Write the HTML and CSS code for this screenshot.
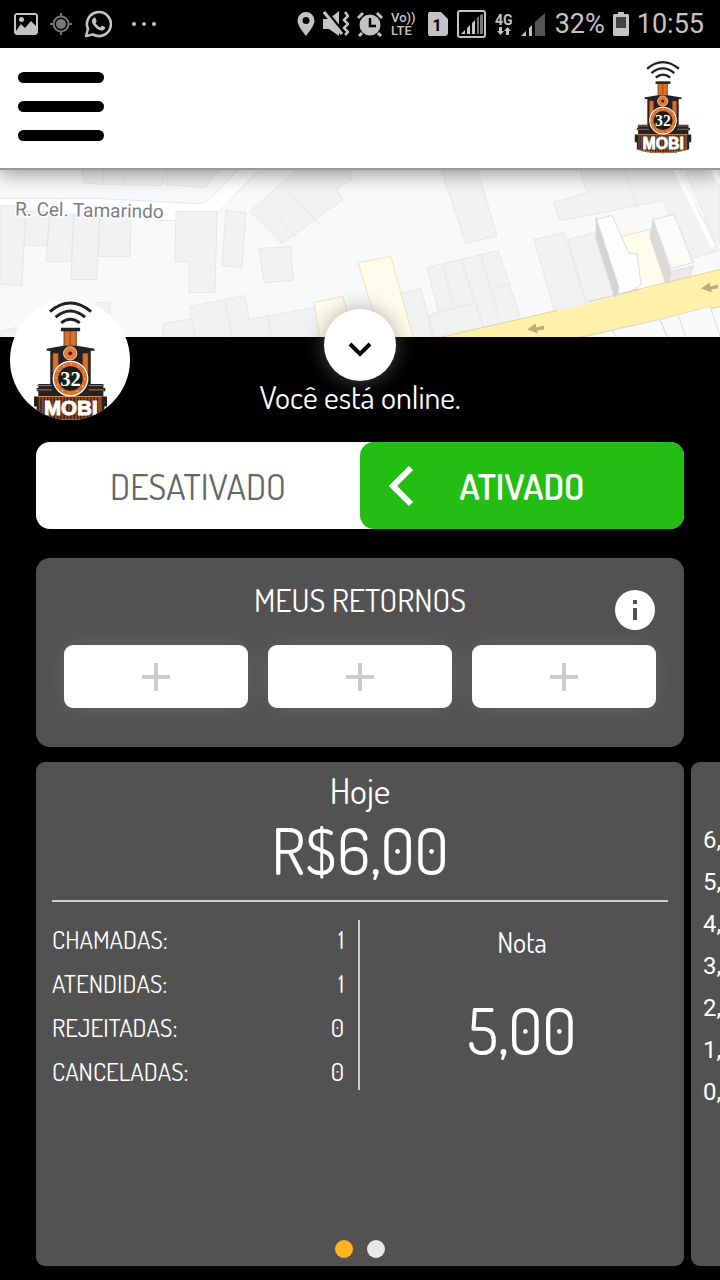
FILE: index.html
```html
<!DOCTYPE html>
<html lang="pt-BR">

<head>
  <meta charset="UTF-8">
  <meta name="viewport" content="width=device-width, initial-scale=1.0">
  <title>32 Mobi</title>
  <link rel="stylesheet" href="styles.css">
</head>

<body>
  <!-- logo shared by the header and the avatar -->
  <svg class="defs" width="0" height="0" aria-hidden="true">
    <symbol id="logo" viewBox="100 30 226 366">
      <g fill="none" stroke="#222" stroke-width="9">
        <path d="M151 64Q212 12 275 64" />
        <path d="M168 81Q212 44 257 81" />
        <path d="M185 98Q212 76 241 98" />
      </g>
      <path d="M192 120h40v58h-40z" fill="#d9702b" />
      <path d="M212 120v50M194 120v50M230 120v50" stroke="#6b3317" stroke-width="2" />
      <path d="M184 113h58v10h-58z" fill="#222" />
      <path d="M141 176l50-9h42l52 9v6h-11v100h38v12h6v10h-6v16H116v-16h-5v-10h5v-12h36V182h-11z" fill="#222" />
      <path d="M160 190h16v44l-16 14zM250 190h16v58l-16-14z" fill="#d9702b" stroke="#8b431c" stroke-width="2" />
      <path d="M112 287h44M112 300h46M268 287h46M268 300h46" stroke="#d9702b" stroke-width="3" />
      <path d="M103 320h220v30h-8v28q-103 30-204 0v-28h-8z" fill="#222" />
      <path d="M117 320h190v58q-95 28-190 0z" fill="#8a4b26" />
      <path d="M124 322v60M134 322v64M144 322v66M154 322v68M164 322v70M174 322v70M184 322v70M194 322v70M204 322v70M214 322v70M224 322v70M234 322v70M244 322v70M254 322v70M264 322v70M274 322v66M284 322v62M294 322v60" stroke="#322016" stroke-width="4" />
      <path d="M117 320h190M122 381q90 20 180 0" fill="none" stroke="#d98a50" stroke-width="3" />
      <circle cx="212" cy="190" r="20" fill="#e57a35" stroke="#f5d4bd" stroke-width="3" />
      <circle cx="212" cy="190" r="6" fill="#501d0c" />
      <circle cx="213" cy="266" r="52" fill="#d9702b" stroke="#fff" stroke-width="4" />
      <circle cx="213" cy="266" r="44" fill="none" stroke="#fbd8bb" stroke-width="4" stroke-dasharray="3 20" />
      <circle cx="213" cy="266" r="37" fill="#1c1c1c" />
      <text class="logo-number" x="213" y="288" text-anchor="middle">32</text>
      <text class="logo-name" x="214" y="375" text-anchor="middle">MOBI</text>
    </symbol>
  </svg>

  <div class="app">
    <div class="status-bar">
      <div class="status-group">
        <svg width="24" height="24" viewBox="0 0 24 24"><path fill="#c4c4c4" fill-rule="evenodd" d="M2 1h20l2 2v18l-2 2H2l-2-2V3zM2 3v16l5-7 4 4 6-7 5 5V3z" /><circle cx="7.500" cy="7.500" r="2.500" fill="#c4c4c4" /></svg>
        <svg width="24" height="24" viewBox="0 0 24 24"><g fill="none" stroke="#777" stroke-width="2"><circle cx="12" cy="12" r="7.500" /><path d="M12 1v4M12 19v4M1 12h4M19 12h4" /></g><circle cx="12" cy="12" r="5" fill="#777" /></svg>
        <svg width="28" height="28" viewBox="0 0 28 28"><path d="M2 26l2-7A12 12 0 1 1 9 24.500z" fill="none" stroke="#c4c4c4" stroke-width="2.600" stroke-linejoin="round" /><path d="M9.500 8q1.300-1 2 .3l1.100 2.600q.2.800-1.200 2.100 1.900 3.200 4.900 4.400l1.600-1.800 3 1.500q.8 2.400-2.300 3.500-3.300.3-7.500-3.700-5.500-6-1.600-8.900z" fill="#c4c4c4" /></svg>
        <svg class="status-more" width="26" height="6" viewBox="0 0 26 6" fill="#c4c4c4"><circle cx="3" cy="3" r="2" /><circle cx="13" cy="3" r="2" /><circle cx="23" cy="3" r="2" /></svg>
      </div>
      <div class="status-group status-right">
        <svg width="18" height="26" viewBox="0 0 18 26"><path fill="#c4c4c4" fill-rule="evenodd" d="M9 1a8.500 8.500 0 0 1 8.500 8.500C17.500 14 13 20 9 25 5 20 .5 14 .5 9.500A8.500 8.500 0 0 1 9 1zm0 5a3.500 3.500 0 1 0 0 7 3.500 3.500 0 0 0 0-7z" /></svg>
        <svg width="26" height="26" viewBox="0 0 26 26"><path d="M0 8h6l10-8v25L6 18H0z" fill="#c4c4c4" /><path d="M3 0l18 22" stroke="#000" stroke-width="3" /><path d="M1 1l18 22" stroke="#c4c4c4" stroke-width="3" /><path d="M22 1l3 4-4 4 4 4-4 4 4 4-3 3" stroke="#c4c4c4" stroke-width="2.500" fill="none" /></svg>
        <svg width="26" height="26" viewBox="0 0 26 26"><circle cx="13" cy="14" r="10.500" fill="#c4c4c4" /><path d="M1 7l5-5M25 7l-5-5M5 22l-3 3M21 22l3 3" stroke="#c4c4c4" stroke-width="3" /><path d="M13 7v8h6" stroke="#000" stroke-width="2.500" fill="none" /></svg>
        <div class="volte"><span>Vo))</span><span>LTE</span></div>
        <svg class="sim" width="22" height="24" viewBox="0 0 22 24"><path d="M2 0h12l7 7v15l-2 2H2l-1-2V2z" fill="#c4c4c4" /><text class="sim-number" x="10" y="19" text-anchor="middle">1</text></svg>
        <svg width="30" height="28" viewBox="0 0 30 28"><rect x="1" y="1" width="27" height="26" rx="2" fill="none" stroke="#c4c4c4" stroke-width="2" /><path d="M4 24l4-4v4zM10 24v-6l3-3v9zM15 24V13l3-3v14z" fill="#c4c4c4" /><path d="M20 24V8l2-2v18zM23 24V5l3-1v20z" fill="#777" /></svg>
        <div class="network"><span>4G</span>
          <svg width="14" height="8" viewBox="0 0 14 8"><path d="M2 0h3v4h2L3.500 8 0 4h2zM9 8h3V4h2l-3.500-4L7 4h2z" fill="#c4c4c4" /></svg>
        </div>
        <svg width="26" height="24" viewBox="0 0 26 24"><path d="M0 24l5-5v5zM8 24v-8l3-3v11z" fill="#c4c4c4" /><path d="M14 24V10l10-9v23z" fill="#555" /></svg>
        <span>32%</span>
        <svg width="16" height="24" viewBox="0 0 16 24"><path d="M5 0h6v2h4l1 1v20l-1 1H1l-1-1V3l1-1h4z" fill="#c4c4c4" /><path d="M3 5h10v11H3z" fill="#444" /></svg>
        <span>10:55</span>
      </div>
    </div>

    <header class="top-bar">
      <button class="menu-btn" type="button" aria-label="Menu"><i></i><i></i><i></i></button>
      <svg class="top-logo" role="img" aria-label="32 Mobi"><use href="#logo" /></svg>
    </header>

    <section class="map">
      <svg class="map-drawing" viewBox="0 0 720 168" preserveAspectRatio="xMidYMid slice" aria-hidden="true">
        <path d="M0 0h720v168H0z" fill="#f8f9fb" />
        <!-- street at the top left -->
        <path d="M0 29h100l95 5Q206 34 212 28L238 0h22l-34 35q-8 10-20 17l-40-1L0 36z" fill="#fff" />
        <path d="M0 29h100l95 5Q206 34 212 28L238 0M260 0l-34 35q-8 10-20 17M175 51h-15" fill="none" stroke="#e5e7e9" />
        <g fill="#f1f2f4" stroke="#e5e7e9">
          <path d="M0 0h82l2 13 18 2 60 1 4-16zM167 0h52l-14 18-39-3zM104 0l-2 15M126 0l-3 16" />
          <path d="M0 36h26l-4 80-22-1zM26 42h24l-3 34H24zM50 45h24l-3 47H46zM74 45h26l-3 65H71zM100 45h31l-1 42H98z" />
          <path d="M176 42h41l-2 81h-26V92h-14zM226 41l20 2-4 55-20-2zM259 79l32-2 2 34-29 2z" />
          <path d="M250 42l47-42h52l3 10-16 10 7 10-61 44zM286 19l34 36M267 35l29 33" />
          <path d="M163 154l28-5-1-12 55-11 4 24 66-12 6 30H163zM191 149l5 19M225 131l7 37M268 147l3 21M96 133h14l-1 35H96zM0 162l16-4v10H0z" />
          <path d="M441 0h36l20 66-31 8zM427 98l34-8 37-9 23 69-90 18-2-22 10-2zM443 95l10 40M461 90l23 69M481 86l18 62M431 144l43-10M497 118l14-4M400 124l21-5 13 49h-26z" />
          <path d="M534 70l30-7 26 83-32 8zM568 70l26-7 24 68-30 9zM580 0l7 23-34 10 7 18 34-6 43-9 26-5 28 58 28-8L685 0zM624 0l15 40M720 75L672 0h48z" />
        </g>
        <path d="M675 0l38 77M713 0l7 14" stroke="#fff" stroke-width="4" />
        <!-- yellow lots -->
        <g fill="#fffcec" stroke="#eee5b5">
          <path d="M358 93l33-6 22 81h-32zM314 133l29-6 10 41h-33zM620 67l30-7 16 56-30 9zM618 168l20-6 5 6z" />
        </g>
        <!-- raised buildings -->
        <g stroke="#dcdcdc">
          <path d="M596 50l16-4 17 38h8l4 31-25 17z" fill="#fdfdfd" />
          <path d="M596 48l23 70-3 15-20-64z" fill="#d4d4d4" />
          <path d="M616 125l23-5-2 8-21 5z" fill="#e7e7e7" />
          <path d="M653 50l21-5 19 48-22 6z" fill="#fdfafa" />
          <path d="M653 50l18 53-4 14-17-49z" fill="#ddd9d9" />
          <path d="M671 102l22-5-5 14-20 5z" fill="#eee9e8" />
        </g>
        <path d="M440 168l150-34 130-34v37l-142 31z" fill="#fff0ab" />
        <path d="M440 168l117-27M589 132l131-32M578 168l142-31" stroke="#e5d58e" fill="none" />
        <g fill="#fafafa" stroke="#ddd">
          <path d="M582 168l78-18 8 18zM660 150l50-13 10 29v2h-53zM678 145l8 23M612 160l4 8" />
        </g>
        <g fill="#b9ae80">
          <path id="arrow" d="M527 160l9-6v4l8-2v4l-7 1 1 3z" />
          <use href="#arrow" x="174" y="-41" />
        </g>
        <text class="street" x="15" y="46" transform="rotate(1 15 46)">R. Cel. Tamarindo</text>
      </svg>
      <button class="collapse-btn" type="button" aria-label="Recolher">
        <svg width="24" height="16" viewBox="0 0 24 16"><path d="M2 3l10 10L22 3" fill="none" stroke="#000" stroke-width="4" /></svg>
      </button>
      <div class="avatar"><svg role="img" aria-label="32 Mobi"><use href="#logo" /></svg></div>
    </section>

    <main class="panel">
      <p class="online">Você está online.</p>

      <div class="toggle">
        <button class="toggle-btn" type="button" aria-pressed="false">DESATIVADO</button>
        <button class="toggle-btn active" type="button" aria-pressed="true">
          <svg width="26" height="42" viewBox="0 0 26 42"><path d="M23 3L5 21l18 18" fill="none" stroke="#fff" stroke-width="6" /></svg>
          ATIVADO
        </button>
      </div>

      <section class="card returns">
        <h2>MEUS RETORNOS</h2>
        <button class="info-btn" type="button" aria-label="Informações">
          <svg width="40" height="40" viewBox="0 0 40 40"><circle cx="20" cy="20" r="20" fill="#fff" /><path d="M18 10h4v4h-4zM18 18h4v12h-4z" fill="#525252" /></svg>
        </button>
        <div class="slots">
          <button class="slot" type="button" aria-label="Adicionar retorno 1"><svg width="28" height="28" viewBox="0 0 28 28"><path d="M14 0v28M0 14h28" stroke="#ccc" stroke-width="4" /></svg></button>
          <button class="slot" type="button" aria-label="Adicionar retorno 2"><svg width="28" height="28" viewBox="0 0 28 28"><path d="M14 0v28M0 14h28" stroke="#ccc" stroke-width="4" /></svg></button>
          <button class="slot" type="button" aria-label="Adicionar retorno 3"><svg width="28" height="28" viewBox="0 0 28 28"><path d="M14 0v28M0 14h28" stroke="#ccc" stroke-width="4" /></svg></button>
        </div>
      </section>

      <div class="carousel">
        <section class="card today">
          <h2>Hoje</h2>
          <div class="amount">R$6,00</div>
          <div class="stats">
            <table class="calls">
              <tr><th scope="row">CHAMADAS:</th><td>1</td></tr>
              <tr><th scope="row">ATENDIDAS:</th><td>1</td></tr>
              <tr><th scope="row">REJEITADAS:</th><td>0</td></tr>
              <tr><th scope="row">CANCELADAS:</th><td>0</td></tr>
            </table>
            <div class="rating">
              <h3>Nota</h3>
              <div class="score">5,00</div>
            </div>
          </div>
          <div class="dots">
            <button class="dot current" type="button" aria-label="Página 1"></button>
            <button class="dot" type="button" aria-label="Página 2"></button>
          </div>
        </section>
        <section class="card chart">
          <span>6,</span>
          <span>5,</span>
          <span>4,</span>
          <span>3,</span>
          <span>2,</span>
          <span>1,</span>
          <span>0,</span>
        </section>
      </div>
    </main>
  </div>
</body>

</html>
```
FILE: styles.css
```css
:root {
  --card: #525252;
  --green: #23bd13;
  --line: #ccc;
  --status: #c4c4c4;
  --side: 36px;
  --radius: 14px;
  --font: "Dosis", "Lato", sans-serif;
}

* {
  box-sizing: border-box;
  margin: 0;
  padding: 0;
}

body {
  background-color: #000;
  color: #fff;
  font-family: var(--font);
}

button {
  border: none;
  background: none;
  font-family: inherit;
  cursor: pointer;
}

svg {
  display: block;
  flex-shrink: 0;
}

h2,
h3,
th {
  font-weight: 400;
}

.defs {
  position: absolute;
}

.logo-number {
  font: bold 62px "Liberation Serif", serif;
  fill: #fff;
}

.logo-name {
  font: bold 62px "Liberation Sans", sans-serif;
  fill: #fff;
  stroke: #fff;
  stroke-width: 3px;
}

.app {
  display: flex;
  flex-direction: column;
  min-height: 100vh;
  overflow: hidden;
}

/* status bar */
.status-bar {
  display: flex;
  justify-content: space-between;
  align-items: center;
  height: 48px;
  padding: 0 16px 0 14px;
  color: var(--status);
  font-family: "Roboto", sans-serif;
  font-size: 27px;
}

.status-group {
  display: flex;
  align-items: center;
  gap: 11px;
}

.status-right {
  gap: 8px;
}

.status-more {
  margin-left: 8px;
}

.volte {
  display: flex;
  flex-direction: column;
  width: 24px;
  font-size: 13px;
  font-weight: 500;
  line-height: 13px;
}

.sim {
  margin-left: 4px;
}

.sim-number {
  font: bold 16px "Roboto", sans-serif;
  fill: #000;
}

.network {
  display: flex;
  flex-direction: column;
  align-items: center;
  font-size: 14px;
  font-weight: 700;
  line-height: 14px;
}

/* header */
.top-bar {
  position: relative;
  z-index: 1;
  display: flex;
  justify-content: space-between;
  align-items: center;
  height: 122px;
  padding: 0 28px 3px 18px;
  background-color: #fff;
  border-bottom: 2px solid #999;
  box-shadow: 0 4px 18px rgba(0, 0, 0, 0.4);
}

.menu-btn {
  display: flex;
  flex-direction: column;
  gap: 18px;
  width: 86px;
}

.menu-btn i {
  height: 11px;
  border-radius: 6px;
  background-color: #000;
}

.top-logo {
  width: 58px;
  height: 94px;
}

/* map */
.map {
  position: relative;
  height: 167px;
}

.map-drawing {
  width: 100%;
  height: 100%;
}

.street {
  font: 19px "Roboto", sans-serif;
  fill: #7d7d7d;
  stroke: #fff;
  stroke-width: 3px;
  paint-order: stroke;
}

.collapse-btn {
  position: absolute;
  bottom: -44px;
  left: calc(50% - 36px);
  display: flex;
  align-items: center;
  justify-content: center;
  width: 72px;
  height: 72px;
  padding-top: 8px;
  border-radius: 50%;
  background-color: #fff;
  box-shadow: 0 0 20px rgba(120, 120, 120, 0.6);
}

.avatar {
  position: absolute;
  bottom: -83px;
  left: 10px;
  display: flex;
  justify-content: center;
  width: 120px;
  height: 120px;
  border-radius: 50%;
  background-color: #fff;
  overflow: hidden;
}

.avatar svg {
  width: 75px;
  height: 122px;
}

/* panel */
.panel {
  flex: 1;
  display: flex;
  flex-direction: column;
  padding: 40px var(--side) 14px;
}

.online {
  margin-bottom: 25px;
  font-size: 32px;
  line-height: 40px;
  text-align: center;
}

.toggle {
  display: grid;
  grid-template-columns: 1fr 1fr;
  margin-bottom: 29px;
  border-radius: var(--radius);
  background-color: #fff;
}

.toggle-btn {
  position: relative;
  height: 87px;
  border-radius: var(--radius);
  color: #666;
  font-size: 36px;
}

.toggle-btn.active {
  background-color: var(--green);
  color: #fff;
  font-weight: 600;
}

.toggle-btn svg {
  position: absolute;
  top: 23px;
  left: 28px;
}

.card {
  border-radius: var(--radius);
  background-color: var(--card);
}

.card h2 {
  font-size: 32px;
  line-height: 40px;
  text-align: center;
}

.returns {
  position: relative;
  margin-bottom: 15px;
  padding: 22px 28px 39px;
}

.info-btn {
  position: absolute;
  top: 32px;
  right: 29px;
}

.slots {
  display: grid;
  grid-template-columns: repeat(3, 1fr);
  gap: 20px;
  margin-top: 25px;
}

.slot {
  display: flex;
  align-items: center;
  justify-content: center;
  height: 63px;
  border-radius: 9px;
  background-color: #fff;
  box-shadow: 0 0 24px rgba(255, 255, 255, 0.1);
}

/* carousel */
.carousel {
  flex: 1;
  display: flex;
  gap: 7px;
}

.carousel .card {
  flex: 0 0 100%;
  display: flex;
  flex-direction: column;
  border-radius: 9px;
}

.today {
  padding: 8px 16px;
}

.today h2 {
  font-size: 36px;
}

.amount,
.score {
  font-size: 64px;
  line-height: 80px;
  text-align: center;
}

.stats {
  display: grid;
  grid-template-columns: 1fr 1fr;
  align-items: start;
  margin-top: 10px;
  padding-top: 18px;
  border-top: 2px solid var(--line);
}

.calls {
  width: 100%;
  border-collapse: collapse;
  border-right: 2px solid var(--line);
  font-size: 25px;
  line-height: 38px;
}

.calls th,
.calls td {
  padding-bottom: 6px;
}

.calls tr:last-child > * {
  padding-bottom: 0;
}

.calls th {
  text-align: left;
}

.calls td {
  padding-right: 14px;
  text-align: right;
}

.rating {
  padding: 2px 0 0 16px;
}

.rating h3 {
  margin-bottom: 28px;
  font-size: 28px;
  line-height: 40px;
  text-align: center;
}

.dots {
  display: flex;
  justify-content: center;
  gap: 14px;
  margin-top: auto;
}

.dot {
  width: 18px;
  height: 18px;
  border-radius: 50%;
  background-color: #e8e8e8;
}

.dot.current {
  background-color: #ffb420;
}

.chart {
  padding: 57px 12px;
  font-family: "Roboto", sans-serif;
  font-size: 24px;
  line-height: 42px;
}
```
